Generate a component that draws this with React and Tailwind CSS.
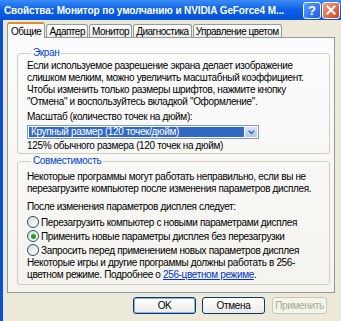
const TABS = ['Общие', 'Адаптер', 'Монитор', 'Диагностика', 'Управление цветом'];

const RADIOS = [
  { label: 'Перезагрузить компьютер с новыми параметрами дисплея', checked: false },
  { label: 'Применить новые параметры дисплея без перезагрузки', checked: true },
  { label: 'Запросить перед применением новых параметров дисплея', checked: false },
];

const Radio = ({ checked }) => (
  <span className="w-[12px] h-[12px] rounded-full border border-[#1c5180] bg-gradient-to-br from-[#dcdcd5] to-white flex items-center justify-center shrink-0">
    {checked && <span className="w-[5px] h-[5px] rounded-full bg-[#21a121]" />}
  </span>
);

const Group = ({ title, children, className = '' }) => (
  <fieldset className={`border border-[#d0d0bf] rounded-[3px] pl-[9px] pr-[4px] ${className}`}>
    <legend className="ml-[4px] px-[2px] text-[#0046d5] leading-[12px]">{title}</legend>
    {children}
  </fieldset>
);

export default function App() {
  return (
    <div
      className="w-[341px] h-[321px] bg-[#ece9d8] flex flex-col text-[10px] tracking-[-0.35px] text-black overflow-hidden"
      style={{ fontFamily: '"Liberation Sans", Arial, sans-serif' }}
    >
      {/* Заголовок окна */}
      <div className="h-[20px] shrink-0 bg-gradient-to-b from-[#3a8cf7] via-[#0a5fe6] to-[#0553d9] flex items-center pl-[4px] pr-[1px]">
        <span className="flex-1 text-white font-bold text-[10px] tracking-[-0.1px] whitespace-nowrap overflow-hidden">
          Свойства: Монитор по умолчанию и NVIDIA GeForce4 M...
        </span>
        <span className="w-[18px] h-[17px] rounded-[3px] border border-white bg-gradient-to-br from-[#5c9cff] to-[#1a5ce8] text-white font-bold text-[13px] tracking-normal leading-none flex items-center justify-center">
          ?
        </span>
        <span className="ml-[1px] w-[18px] h-[17px] rounded-[3px] border border-white bg-gradient-to-br from-[#f29b7c] to-[#d4401c] flex items-center justify-center">
          <svg width="10" height="10" viewBox="0 0 10 10">
            <path d="M1.5 1.5 L8.5 8.5 M8.5 1.5 L1.5 8.5" stroke="white" strokeWidth="2.2" strokeLinecap="square" />
          </svg>
        </span>
      </div>

      <div className="flex-1 flex flex-col border-l-[3px] border-[#0b4fd6] pl-[4px] pr-[6px]">
        {/* Вкладки */}
        <div className="flex items-end h-[17px] relative z-10 tracking-[-0.5px]">
          {TABS.map((t, i) =>
            i === 0 ? (
              <div
                key={t}
                className="h-[16px] -mb-px px-[3px] bg-[#fcfcfe] border border-b-0 border-[#919b9c] border-t-[2px] border-t-[#e68b2c] rounded-t-[3px] flex items-center"
              >
                {t}
              </div>
            ) : (
              <div
                key={t}
                className="h-[13px] ml-[1px] px-[2px] bg-gradient-to-b from-white to-[#ecebe5] border border-b-0 border-[#919b9c] rounded-t-[3px] flex items-center"
              >
                {t}
              </div>
            )
          )}
        </div>

        {/* Панель вкладки */}
        <div className="h-[256px] shrink-0 border border-[#919b9c] bg-gradient-to-b from-[#fcfcfe] to-[#f4f3ee] pl-[9px] pr-[4px] pt-[9px] flex flex-col gap-[1px]">
          <Group title="Экран" className="pb-[1px]">
            <div className="leading-[12px] mt-[1px] whitespace-nowrap">
              <p>Если используемое разрешение экрана делает изображение</p>
              <p>слишком мелким, можно увеличить масштабный коэффициент.</p>
              <p>Чтобы изменить только размеры шрифтов, нажмите кнопку</p>
              <p>"Отмена" и воспользуйтесь вкладкой "Оформление".</p>
            </div>
            <p className="mt-[3px] leading-[12px]">Масштаб (количество точек на дюйм):</p>
            <div className="mt-[2px] w-[232px] h-[14px] border border-[#7f9db9] bg-white flex items-center p-[1px]">
              <span className="flex-1 h-full bg-[#316ac5] text-white leading-[10px] pl-[2px]">
                Крупный размер (120 точек/дюйм)
              </span>
              <span className="w-[12px] h-full ml-[1px] bg-gradient-to-b from-[#d7e3fd] to-[#b2c8f5] flex items-center justify-center">
                <svg width="7" height="5" viewBox="0 0 7 5">
                  <path d="M0.8 0.8 L3.5 3.6 L6.2 0.8" stroke="#4d6185" strokeWidth="1.4" fill="none" />
                </svg>
              </span>
            </div>
            <p className="mt-[1px] leading-[12px]">125% обычного размера (120 точек на дюйм)</p>
          </Group>

          <Group title="Совместимость" className="pb-[3px]">
            <div className="leading-[12px] mt-[4px] whitespace-nowrap">
              <p>Некоторые программы могут работать неправильно, если вы не</p>
              <p>перезагрузите компьютер после изменения параметров дисплея.</p>
            </div>
            <p className="mt-[6px] leading-[12px]">После изменения параметров дисплея следует:</p>
            <div className="mt-[2px] flex flex-col">
              {RADIOS.map((r) => (
                <label key={r.label} className="h-[14px] flex items-center gap-[2px] whitespace-nowrap">
                  <Radio checked={r.checked} />
                  <span>{r.label}</span>
                </label>
              ))}
            </div>
            <div className="leading-[12px] whitespace-nowrap">
              <p>Некоторые игры и другие программы должны работать в 256-</p>
              <p>
                цветном режиме. Подробнее о{' '}
                <span className="text-[#0033cc] underline">256-цветном режиме</span>.
              </p>
            </div>
          </Group>
        </div>

        {/* Кнопки */}
        <div className="flex justify-end mt-[4px] pr-[8px]">
          <button className="w-[63px] h-[17px] rounded-[3px] border border-[#003c74] bg-gradient-to-b from-white to-[#ecebe6] shadow-[inset_0_0_0_1px_#8fb2ee]">
            OK
          </button>
          <button className="ml-[6px] w-[63px] h-[17px] rounded-[3px] border border-[#003c74] bg-gradient-to-b from-white to-[#ecebe6]">
            Отмена
          </button>
          <button className="ml-[7px] w-[55px] h-[17px] rounded-[3px] border border-[#c9c7ba] bg-[#f5f4ea] text-[#aca899]">
            Применить
          </button>
        </div>
      </div>
    </div>
  );
}
